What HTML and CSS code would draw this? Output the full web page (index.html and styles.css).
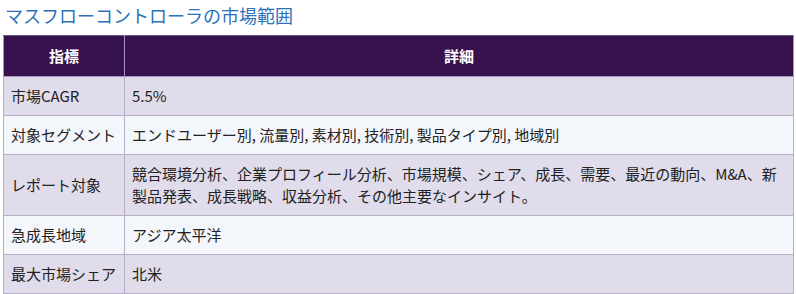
FILE: index.html
```html
<!DOCTYPE html>
<html lang="ja">
<head>
<meta charset="utf-8">
<link rel="stylesheet" href="styles.css">
</head>
<body>
<h2 class="title">マスフローコントローラの市場範囲</h2>
<table class="scope">
  <thead>
    <tr><th class="col-key">指標</th><th>詳細</th></tr>
  </thead>
  <tbody>
    <tr><td>市場CAGR</td><td>5.5%</td></tr>
    <tr><td>対象セグメント</td><td>エンドユーザー別, 流量別, 素材別, 技術別, 製品タイプ別, 地域別</td></tr>
    <tr><td>レポート対象</td><td>競合環境分析、企業プロフィール分析、市場規模、シェア、成長、需要、最近の動向、M&amp;A、新製品発表、成長戦略、収益分析、その他主要なインサイト。</td></tr>
    <tr><td>急成長地域</td><td>アジア太平洋</td></tr>
    <tr><td>最大市場シェア</td><td>北米</td></tr>
  </tbody>
</table>
</body>
</html>
```
FILE: styles.css
```css
html, body {
  margin: 0;
  padding: 0;
  background: #ffffff;
}
body {
  padding: 0 3px;
  font-family: "Noto Sans CJK JP", sans-serif;
  color: #222222;
}
.title {
  margin: 2px 0 0 2px;
  height: 33px;
  font-size: 18px;
  line-height: 26px;
  font-weight: normal;
  color: #2b70b8;
}
.scope {
  width: 791px;
  border-collapse: collapse;
  font-size: 15px;
  line-height: 22px;
}
.scope th {
  background: #37114e;
  color: #ffffff;
  font-weight: bold;
  text-align: center;
  padding: 9px 8px;
  border: 1px solid #a996c0;
  border-top-color: #6d5a80;
}
.scope th.col-key {
  width: 104px;
}
.scope td {
  padding: 8px 8px 8px 7px;
  border: 1px solid #b5aec4;
  vertical-align: middle;
  text-align: left;
}
.scope tbody tr:nth-child(odd) td {
  background: #e0dceb;
}
.scope tbody tr:nth-child(even) td {
  background: #f3f6fb;
}
```
